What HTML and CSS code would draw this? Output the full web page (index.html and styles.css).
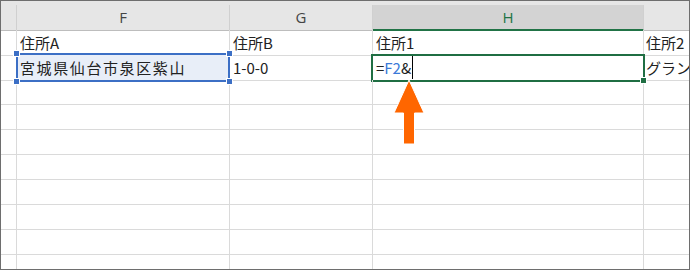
FILE: index.html
```html
<!DOCTYPE html>
<html lang="ja">
<head>
    <meta charset="UTF-8">
    <title>住所の結合</title>
    <link rel="stylesheet" href="styles.css">
</head>
<body>
    <div class="sheet">
        <div class="row strip">
            <div class="cell"></div><div class="cell"></div><div class="cell"></div><div class="cell"></div><div class="cell"></div>
        </div>
        <div class="row head">
            <div class="cell"></div>
            <div class="cell">F</div>
            <div class="cell">G</div>
            <div class="cell active-col">H</div>
            <div class="cell"></div>
        </div>
        <div class="row">
            <div class="cell"></div>
            <div class="cell">住所A</div>
            <div class="cell">住所B</div>
            <div class="cell">住所1</div>
            <div class="cell">住所2</div>
        </div>
        <div class="row">
            <div class="cell"></div>
            <div class="cell ref">
                <span class="spaced">宮城県仙台市泉区紫山</span>
                <i class="handle tl"></i><i class="handle tr"></i><i class="handle bl"></i><i class="handle br"></i>
            </div>
            <div class="cell">1-0-0</div>
            <div class="cell editing">=<span class="ref-text">F2</span>&amp;<span class="caret"></span>
                <i class="fill-handle"></i>
            </div>
            <div class="cell">グラン</div>
        </div>
        <div class="row"><div class="cell"></div><div class="cell"></div><div class="cell"></div><div class="cell"></div><div class="cell"></div></div>
        <div class="row"><div class="cell"></div><div class="cell"></div><div class="cell"></div><div class="cell"></div><div class="cell"></div></div>
        <div class="row"><div class="cell"></div><div class="cell"></div><div class="cell"></div><div class="cell"></div><div class="cell"></div></div>
        <div class="row"><div class="cell"></div><div class="cell"></div><div class="cell"></div><div class="cell"></div><div class="cell"></div></div>
        <div class="row"><div class="cell"></div><div class="cell"></div><div class="cell"></div><div class="cell"></div><div class="cell"></div></div>
        <div class="row"><div class="cell"></div><div class="cell"></div><div class="cell"></div><div class="cell"></div><div class="cell"></div></div>
        <div class="row"><div class="cell"></div><div class="cell"></div><div class="cell"></div><div class="cell"></div><div class="cell"></div></div>
        <div class="row"><div class="cell"></div><div class="cell"></div><div class="cell"></div><div class="cell"></div><div class="cell"></div></div>

        <!-- arrow pointing at the cursor -->
        <svg class="arrow" width="34" height="68" viewBox="0 0 34 68">
            <polygon points="17,1 32,34 22.5,34 22.5,65 11.5,65 11.5,34 2,34" fill="#ff6600" stroke="#ffffff" stroke-width="1"/>
        </svg>
    </div>
</body>
</html>
```

FILE: styles.css
```css
body {
    margin: 0;
    background: #ffffff;
    font-family: "Noto Sans CJK JP", "Noto Sans", sans-serif;
}

.sheet {
    position: relative;
    width: 690px;
    height: 270px;
    box-sizing: border-box;
    border: 1px solid #6e6e6e;
    overflow: hidden;
    background: #ffffff;
}

.row {
    display: grid;
    grid-template-columns: 16px 213px 143px 271px 45px;
    height: 25px;
}

.cell {
    position: relative;
    box-sizing: border-box;
    border-right: 1px solid #dadada;
    border-bottom: 1px solid #dadada;
    padding-left: 3px;
    font-size: 15px;
    line-height: 25px;
    color: #222222;
    white-space: nowrap;
    overflow: visible;
}

.row .cell:first-child {
    padding-left: 0;
}

.row .cell:last-child {
    border-right: none;
    overflow: hidden;
    padding-left: 2px;
}

/* header strip and column letters */
.strip {
    height: 4px;
    background: #e6e6e6;
}

.strip .cell {
    border: none;
}

.head {
    background: #e6e6e6;
}

.head .cell {
    border-right-color: #d0d0d0;
    border-bottom-color: #bdbdbd;
    padding-left: 0;
    text-align: center;
    font-family: "Open Sans", "Noto Sans", sans-serif;
    font-size: 15px;
    line-height: 24px;
    color: #444444;
}

.head .active-col {
    background: #d3d3d3;
    color: #217346;
    border-bottom: 2px solid #217346;
}

/* referenced cell F2 */
.ref {
    background: #e8eef8;
}

.ref::after {
    content: "";
    position: absolute;
    left: -1px;
    top: -2px;
    right: -1px;
    bottom: -2px;
    border: 2px solid #3c6fc5;
}

.spaced {
    letter-spacing: 1.6px;
}

.handle {
    position: absolute;
    width: 5px;
    height: 5px;
    background: #3c6fc5;
    border: 1px solid #ffffff;
    z-index: 2;
}

.handle.tl { left: -4px; top: -5px; }
.handle.tr { right: -4px; top: -5px; }
.handle.bl { left: -4px; bottom: -5px; }
.handle.br { right: -4px; bottom: -5px; }

/* cell being edited H2 */
.editing::after {
    content: "";
    position: absolute;
    left: -2px;
    top: -1px;
    right: -2px;
    bottom: -2px;
    border: 2px solid #1f6e43;
}

.ref-text {
    color: #3a79d8;
}

.caret {
    display: inline-block;
    width: 1px;
    height: 24px;
    margin-left: 1px;
    vertical-align: top;
    background: #000000;
}

.fill-handle {
    position: absolute;
    right: -4px;
    bottom: -4px;
    width: 5px;
    height: 5px;
    background: #1f6e43;
    border: 1px solid #ffffff;
    z-index: 2;
}

.arrow {
    position: absolute;
    left: 391px;
    top: 78px;
}
```
